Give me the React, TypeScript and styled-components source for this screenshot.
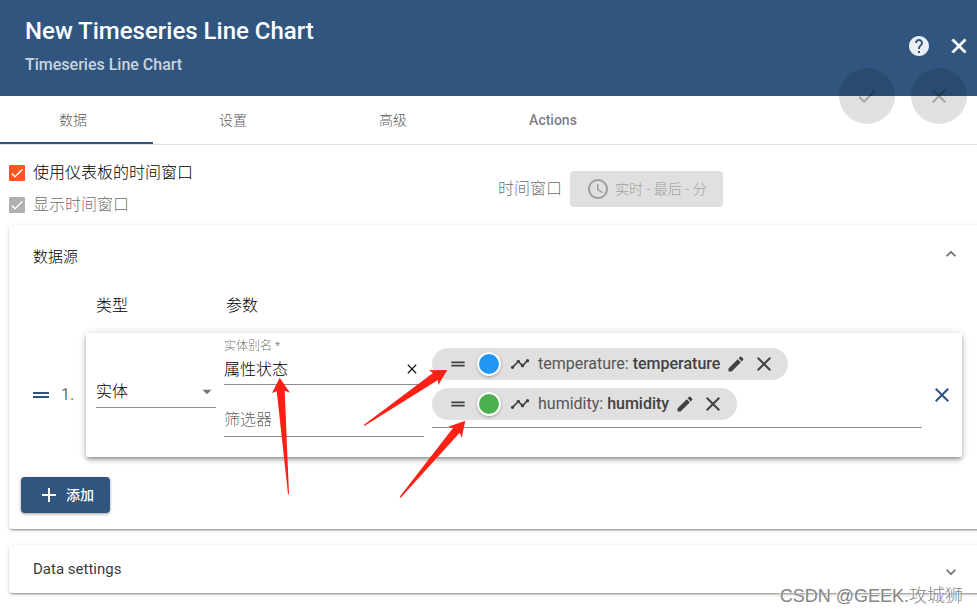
import React from "react";
import styled, { createGlobalStyle, css } from "styled-components";

const PRIMARY = "#305680";

const GlobalStyle = createGlobalStyle`
  *, *::before, *::after { box-sizing: border-box; }
  body {
    margin: 0;
    background: #fff;
    color: rgba(0, 0, 0, 0.87);
    font-family: Roboto, "Noto Sans CJK SC", sans-serif;
    font-size: 16px;
    line-height: 24px;
  }
  button, input, select { font: inherit; color: inherit; margin: 0; }
  h1, h2, p, ol, ul { margin: 0; padding: 0; }
  ol, ul { list-style: none; }
`;

const PATHS = {
  close: "M19 6.41L17.59 5 12 10.59 6.41 5 5 6.41 10.59 12 5 17.59 6.41 19 12 13.41 17.59 19 19 17.59 13.41 12z",
  check: "M9 16.17L4.83 12l-1.42 1.41L9 19 21 7l-1.41-1.41z",
  help: "M12 2C6.48 2 2 6.48 2 12s4.48 10 10 10 10-4.48 10-10S17.52 2 12 2zm1 17h-2v-2h2v2zm2.07-7.75l-.9.92C13.45 12.9 13 13.5 13 15h-2v-.5c0-1.1.45-2.1 1.17-2.83l1.24-1.26c.37-.36.59-.86.59-1.41 0-1.1-.9-2-2-2s-2 .9-2 2H8c0-2.21 1.79-4 4-4s4 1.79 4 4c0 .88-.36 1.68-.93 2.25z",
  clock: "M11.99 2C6.47 2 2 6.48 2 12s4.47 10 9.99 10C17.52 22 22 17.52 22 12S17.52 2 11.99 2zM12 20c-4.42 0-8-3.58-8-8s3.58-8 8-8 8 3.58 8 8-3.58 8-8 8zm.5-13H11v6l5.25 3.15.75-1.23-4.5-2.67z",
  drag: "M20 9H4v2h16V9zM4 15h16v-2H4v2z",
  timeline: "M23 8c0 1.1-.9 2-2 2-.18 0-.35-.02-.51-.07l-3.56 3.55c.05.16.07.34.07.52 0 1.1-.9 2-2 2s-2-.9-2-2c0-.18.02-.36.07-.52l-2.55-2.55c-.16.05-.34.07-.52.07s-.36-.02-.52-.07l-4.55 4.56c.05.16.07.33.07.51 0 1.1-.9 2-2 2s-2-.9-2-2 .9-2 2-2c.18 0 .35.02.51.07l4.56-4.55C8.02 9.36 8 9.18 8 9c0-1.1.9-2 2-2s2 .9 2 2c0 .18-.02.36-.07.52l2.55 2.55c.16-.05.34-.07.52-.07s.36.02.52.07l3.55-3.56C19.02 8.35 19 8.18 19 8c0-1.1.9-2 2-2s2 .9 2 2z",
  edit: "M3 17.25V21h3.75L17.81 9.94l-3.75-3.75L3 17.25zM20.71 7.04c.39-.39.39-1.02 0-1.41l-2.34-2.34c-.39-.39-1.02-.39-1.41 0l-1.83 1.83 3.75 3.75 1.83-1.83z",
  add: "M19 13h-6v6h-2v-6H5v-2h6V5h2v6h6v2z",
  up: "M12 8l-6 6 1.41 1.41L12 10.83l4.59 4.58L18 14z",
  down: "M16.59 8.59L12 13.17 7.41 8.59 6 10l6 6 6-6z",
  caret: "M6 9l6 6 6-6z",
};

const Glyph = styled.svg<{ $size: number; $bold?: boolean }>`
  display: block;
  flex: none;
  width: ${(p) => p.$size}px;
  height: ${(p) => p.$size}px;
  fill: currentColor;
  ${(p) => p.$bold && css`stroke: currentColor; stroke-width: 1;`}
`;

function Icon({ name, size = 24, bold }: { name: keyof typeof PATHS; size?: number; bold?: boolean }) {
  return (
    <Glyph viewBox="0 0 24 24" $size={size} $bold={bold} aria-hidden="true">
      <path d={PATHS[name]} />
    </Glyph>
  );
}

const Page = styled.div`
  position: relative;
  min-height: 100vh;
  overflow: hidden;
`;

const Header = styled.header`
  position: relative;
  display: flex;
  justify-content: space-between;
  height: 96px;
  padding: 15px 6px 0 25px;
  background: ${PRIMARY};
  color: #fff;
`;

const Title = styled.h1`
  font-size: 24px;
  line-height: 32px;
  font-weight: 500;
`;

const Subtitle = styled.p`
  margin-top: 6px;
  color: rgba(255, 255, 255, 0.76);
  font-size: 16px;
  line-height: 24px;
  font-weight: 500;
`;

const HeaderActions = styled.div`
  display: flex;
  align-items: flex-start;
  gap: 16px;
  padding-top: 19px;
`;

const IconButton = styled.button<{ $tone?: string }>`
  display: grid;
  place-items: center;
  flex: none;
  padding: 0;
  border: 0;
  background: none;
  color: ${(p) => p.$tone ?? "inherit"};
`;

const FabGroup = styled.div`
  position: absolute;
  right: 10px;
  bottom: -28px;
  display: flex;
  gap: 16px;
`;

const Fab = styled.button`
  display: grid;
  place-items: center;
  width: 56px;
  height: 56px;
  padding: 0;
  border: 0;
  border-radius: 50%;
  background: rgba(0, 0, 0, 0.12);
  color: rgba(0, 0, 0, 0.26);
`;

const Tabs = styled.div`
  display: flex;
  height: 49px;
  margin-left: -7px;
  border-bottom: 1px solid #e0e0e0;
`;

const Tab = styled.button<{ $active?: boolean }>`
  width: 160px;
  padding: 2px 0 0;
  border: 0;
  border-bottom: 2px solid ${(p) => (p.$active ? PRIMARY : "transparent")};
  background: none;
  color: rgba(0, 0, 0, ${(p) => (p.lang === "en" ? 0.54 : 0.7)});
  font-size: 14px;
  font-weight: ${(p) => (p.lang === "en" ? 500 : 300)};
`;

const Body = styled.main`
  padding: 12px 0 0 9px;
`;

const WindowSettings = styled.section`
  display: flex;
  align-items: center;
  margin-bottom: 4px;
`;

const CheckList = styled.div`
  flex: 1;
`;

const CheckRow = styled.label<{ $muted?: boolean }>`
  display: flex;
  align-items: center;
  gap: 8px;
  height: 32px;
  font-weight: 300;
  color: rgba(0, 0, 0, ${(p) => (p.$muted ? 0.6 : 1)});
`;

const CheckMark = styled.span`
  display: grid;
  width: 16px;
  height: 16px;
  color: #fff;
  > * { grid-area: 1 / 1; }
  > svg { pointer-events: none; }
`;

const CheckInput = styled.input`
  appearance: none;
  width: 16px;
  height: 16px;
  border-radius: 1px;
  background: #ff5722;
  &:disabled { background: #b0b0b0; }
`;

const TimeWindow = styled.div`
  display: flex;
  flex: 0 0 479px;
  align-items: center;
  gap: 8px;
  color: rgba(0, 0, 0, 0.6);
  font-weight: 300;
`;

const TimeButton = styled.button`
  display: flex;
  align-items: center;
  gap: 5px;
  height: 36px;
  padding: 0 16px;
  border: 0;
  border-radius: 4px;
  background: #e0e0e0;
  color: #a0a0a0;
  font-size: 14px;
`;

const Panel = styled.section`
  margin: 0 -8px 16px 0;
  border-radius: 4px;
  background: #fff;
  box-shadow: 0 3px 1px -2px rgba(0, 0, 0, 0.2), 0 2px 2px 0 rgba(0, 0, 0, 0.14), 0 1px 5px 0 rgba(0, 0, 0, 0.12);
`;

const PanelHeader = styled.button<{ $open?: boolean }>`
  display: flex;
  align-items: center;
  justify-content: space-between;
  width: 100%;
  height: ${(p) => (p.$open ? 64 : 48)}px;
  padding: 0 24px;
  border: 0;
  background: none;
  font-size: 15px;
  font-weight: ${(p) => (p.$open ? 300 : 400)};
  color: ${(p) => (p.$open ? "#000" : "rgba(0, 0, 0, 0.8)")};
  text-align: left;
`;

const Chevron = styled.span<{ $low?: boolean }>`
  padding-top: ${(p) => (p.$low ? 6 : 0)}px;
  padding-bottom: ${(p) => (p.$low ? 0 : 6)}px;
  color: rgba(0, 0, 0, 0.6);
`;

const PanelBody = styled.div`
  padding: 0 23px 16px 12px;
`;

const ColumnHeads = styled.div`
  display: grid;
  grid-template-columns: 130px 1fr;
  padding: 5px 0 15px 75px;
  font-weight: 300;
  color: #000;
`;

const SourceRow = styled.li`
  display: flex;
  align-items: center;
  margin-bottom: 20px;
`;

const Ordinal = styled.div`
  display: flex;
  align-items: center;
  gap: 8px;
  width: 65px;
  padding-left: 8px;
  color: rgba(0, 0, 0, 0.6);
`;

const SourceCard = styled.div`
  display: flex;
  flex: 1;
  min-width: 0;
  gap: 8px;
  height: 124px;
  padding-left: 10px;
  border-radius: 2px;
  box-shadow: 0 3px 3px -2px rgba(0, 0, 0, 0.2), 0 3px 4px 0 rgba(0, 0, 0, 0.2), 0 1px 8px 0 rgba(0, 0, 0, 0.2);
`;

const UNDERLINE = "1px solid #8c8c8c";

const TypeField = styled.div`
  display: grid;
  flex: 0 0 120px;
  align-self: flex-start;
  align-items: center;
  margin-top: 43px;
  border-bottom: ${UNDERLINE};
  > * { grid-area: 1 / 1; }
  > svg { justify-self: end; color: rgba(0, 0, 0, 0.54); pointer-events: none; }
`;

const TypeSelect = styled.select`
  appearance: none;
  width: 100%;
  height: 31px;
  padding: 0;
  border: 0;
  background: none;
  font-weight: 300;
  color: #000;
`;

const ParamFields = styled.div`
  flex: 0 0 200px;
  min-width: 0;
  padding-top: 5px;
`;

const FieldLabel = styled.label`
  display: block;
  height: 16px;
  color: rgba(0, 0, 0, 0.6);
  font-size: 12px;
  line-height: 16px;
  font-weight: 300;
`;

const FieldLine = styled.div<{ $gap?: number }>`
  display: flex;
  align-items: center;
  height: 31px;
  margin-top: ${(p) => p.$gap ?? 0}px;
  padding-right: 4px;
  border-bottom: ${UNDERLINE};
`;

const TextInput = styled.input`
  flex: 1;
  min-width: 0;
  height: 30px;
  padding: 0 0 3px;
  border: 0;
  outline: 0;
  background: none;
  font-weight: 300;
  color: #000;
  &::placeholder { color: rgba(0, 0, 0, 0.64); opacity: 1; }
`;

const KeyList = styled.ul`
  display: flex;
  flex: 1;
  flex-direction: column;
  align-items: flex-start;
  align-self: flex-start;
  gap: 8px;
  padding: 15px 0 7px;
  border-bottom: ${UNDERLINE};
`;

const Chip = styled.li`
  display: flex;
  align-items: center;
  height: 32px;
  padding: 0 12px 0 16px;
  border-radius: 16px;
  background: #e0e0e0;
  color: #424242;
`;

const Swatch = styled.button<{ $color: string }>`
  width: 24px;
  height: 24px;
  margin: 0 9px;
  padding: 0;
  border: 2px solid #fff;
  border-radius: 50%;
  background: ${(p) => p.$color};
  box-shadow: 0 1px 3px rgba(0, 0, 0, 0.3);
`;

const KeyText = styled.span`
  margin: 0 6px 0 8px;
  white-space: nowrap;
  color: #555;
  strong { font-weight: 500; color: #424242; }
`;

const ChipActions = styled.span`
  display: flex;
  gap: 6px;
`;

const RemoveCell = styled.div`
  display: grid;
  place-items: center;
  flex: 0 0 24px;
  margin-right: 8px;
`;

const AddButton = styled.button`
  display: flex;
  align-items: center;
  gap: 5px;
  height: 36px;
  padding: 0 16px;
  border: 0;
  border-radius: 4px;
  background: ${PRIMARY};
  color: #fff;
  font-size: 14px;
  font-weight: 500;
  box-shadow: 0 1px 3px rgba(0, 0, 0, 0.4);
`;

const Annotations = styled.svg`
  position: absolute;
  top: 0;
  left: 0;
  fill: #ff2015;
  pointer-events: none;
`;

const Watermark = styled.div`
  position: absolute;
  right: 14px;
  bottom: 6px;
  color: #858585;
  font-family: "Liberation Sans", "Noto Sans CJK SC", sans-serif;
  font-size: 18px;
  font-weight: 300;
  text-shadow: -1px -1px 0 #fff;
`;

const KEYS = [
  { name: "temperature", color: "#2196f3" },
  { name: "humidity", color: "#4caf50" },
];

function DataKeyChip({ name, color }: { name: string; color: string }) {
  return (
    <Chip>
      <Icon name="drag" size={20} />
      <Swatch $color={color} aria-label={`${name} color`} />
      <Icon name="timeline" size={20} />
      <KeyText>
        {name}: <strong>{name}</strong>
      </KeyText>
      <ChipActions>
        <IconButton aria-label={`Edit ${name}`}><Icon name="edit" size={20} /></IconButton>
        <IconButton aria-label={`Remove ${name}`}><Icon name="close" /></IconButton>
      </ChipActions>
    </Chip>
  );
}

function Checkbox({ label, disabled }: { label: string; disabled?: boolean }) {
  return (
    <CheckRow $muted={disabled}>
      <CheckMark>
        <CheckInput type="checkbox" defaultChecked disabled={disabled} />
        <Icon name="check" size={16} />
      </CheckMark>
      {label}
    </CheckRow>
  );
}

export default function App() {
  return (
    <Page lang="zh-CN">
      <GlobalStyle />
      <Header>
        <div>
          <Title>New Timeseries Line Chart</Title>
          <Subtitle>Timeseries Line Chart</Subtitle>
        </div>
        <HeaderActions>
          <IconButton $tone="rgba(255, 255, 255, 0.9)" aria-label="Help"><Icon name="help" /></IconButton>
          <IconButton aria-label="Close"><Icon name="close" bold /></IconButton>
        </HeaderActions>
        <FabGroup>
          <Fab disabled aria-label="Apply"><Icon name="check" /></Fab>
          <Fab disabled aria-label="Discard"><Icon name="close" /></Fab>
        </FabGroup>
      </Header>

      <Tabs role="tablist">
        <Tab role="tab" aria-selected="true" $active>数据</Tab>
        <Tab role="tab" aria-selected="false">设置</Tab>
        <Tab role="tab" aria-selected="false">高级</Tab>
        <Tab role="tab" aria-selected="false" lang="en">Actions</Tab>
      </Tabs>

      <Body>
        <WindowSettings>
          <CheckList>
            <Checkbox label="使用仪表板的时间窗口" />
            <Checkbox label="显示时间窗口" disabled />
          </CheckList>
          <TimeWindow>
            <span>时间窗口</span>
            <TimeButton disabled>
              <Icon name="clock" />
              实时 - 最后 - 分
            </TimeButton>
          </TimeWindow>
        </WindowSettings>

        <Panel>
          <PanelHeader $open aria-expanded="true">
            数据源
            <Chevron><Icon name="up" size={20} /></Chevron>
          </PanelHeader>
          <PanelBody>
            <ColumnHeads>
              <span>类型</span>
              <span>参数</span>
            </ColumnHeads>
            <ol>
              <SourceRow>
                <Ordinal>
                  <IconButton $tone={PRIMARY} aria-label="Reorder"><Icon name="drag" /></IconButton>
                  1.
                </Ordinal>
                <SourceCard>
                  <TypeField>
                    <TypeSelect aria-label="类型" defaultValue="entity">
                      <option value="entity">实体</option>
                    </TypeSelect>
                    <Icon name="caret" size={18} />
                  </TypeField>
                  <ParamFields>
                    <FieldLabel htmlFor="alias">实体别名 *</FieldLabel>
                    <FieldLine>
                      <TextInput id="alias" defaultValue="属性状态" />
                      <IconButton aria-label="Clear"><Icon name="close" size={16} /></IconButton>
                    </FieldLine>
                    <FieldLine $gap={21}>
                      <TextInput aria-label="筛选器" placeholder="筛选器" />
                    </FieldLine>
                  </ParamFields>
                  <KeyList>
                    {KEYS.map((key) => (
                      <DataKeyChip key={key.name} {...key} />
                    ))}
                  </KeyList>
                  <RemoveCell>
                    <IconButton $tone={PRIMARY} aria-label="Remove datasource"><Icon name="close" /></IconButton>
                  </RemoveCell>
                </SourceCard>
              </SourceRow>
            </ol>
            <AddButton><Icon name="add" />添加</AddButton>
          </PanelBody>
        </Panel>

        <Panel>
          <PanelHeader aria-expanded="false">
            Data settings
            <Chevron $low><Icon name="down" size={20} /></Chevron>
          </PanelHeader>
        </Panel>
      </Body>

      <Annotations width="480" height="510" viewBox="0 0 480 510" aria-hidden="true">
        <path d="M279.7 377.7L272 393l4.7-1.7L288 494h1l-4.3-103.3 5.3 2z" />
        <path d="M447.3 370l-18.6.3 4.3 2.7-69 51.7.3 1.3L438 380l.3 5z" />
        <path d="M465.3 420.7l-17 6 4.7 1.3-53.3 68.7 1 1 59-65 2 5.3z" />
      </Annotations>
      <Watermark>CSDN @GEEK.攻城狮</Watermark>
    </Page>
  );
}
